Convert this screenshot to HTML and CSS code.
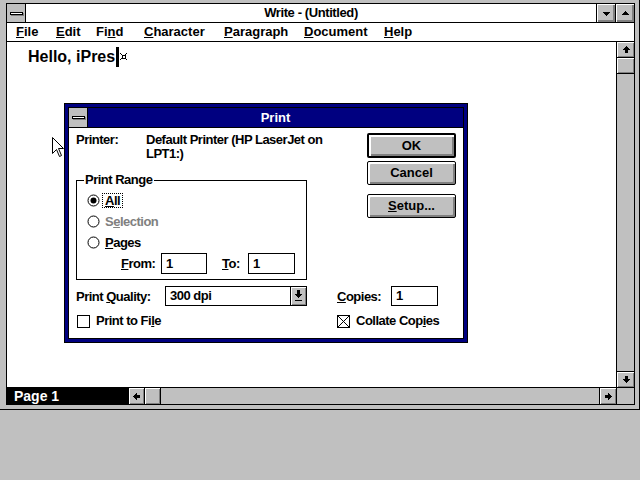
FILE: index.html
```html
<!DOCTYPE html>
<html>
<head>
<meta charset="utf-8">
<title>Write - (Untitled)</title>
<link rel="stylesheet" href="styles.css">
</head>
<body>
<div class="desktop">
  <div class="window">
    <div class="frame">
      <div class="titlebar">
        <div class="sysbox"><span class="sysdash"></span></div>
        <div class="title">Write - (Untitled)</div>
        <div class="tbtn"><svg width="17" height="18" viewBox="0 0 17 18" shape-rendering="crispEdges"><path d="M5 8h7v1h-1v1h-1v1h-1v1h-1v-1h-1v-1h-1v-1h-1z"/></svg></div>
        <div class="tbtn"><svg width="17" height="18" viewBox="0 0 17 18" shape-rendering="crispEdges"><path d="M5 11h7v-1h-1v-1h-1v-1h-1v-1h-1v1h-1v1h-1v1h-1z"/></svg></div>
      </div>
      <div class="menubar">
        <span><u>F</u>ile</span>
        <span><u>E</u>dit</span>
        <span>Fi<u>n</u>d</span>
        <span><u>C</u>haracter</span>
        <span><u>P</u>aragraph</span>
        <span><u>D</u>ocument</span>
        <span><u>H</u>elp</span>
      </div>
      <div class="client">
        <div class="doc"><span class="doctext">Hello, iPres</span><span class="caret"></span><svg class="endmark" width="7" height="7" viewBox="0 0 7 7" shape-rendering="crispEdges"><path d="M2 2h3v3h-3z" fill="none" stroke="#000"/><path d="M0 0h1v1h-1zM6 0h1v1h-1zM0 6h1v1h-1zM6 6h1v1h-1zM1 1h1v1h-1zM5 1h1v1h-1zM1 5h1v1h-1zM5 5h1v1h-1z"/></svg></div>
        <div class="vscroll">
          <div class="sbtn sbtn-top"><svg width="16" height="15" viewBox="0 0 15 15" shape-rendering="crispEdges"><path d="M7 4h1v1h1v1h1v1h1v1h-2v3h-3v-3h-2v-1h1v-1h1v-1h1z"/></svg></div>
          <div class="sbtn sbtn-top thumb"></div>
          <div class="track"></div>
          <div class="sbtn sbtn-bottom"><svg width="16" height="15" viewBox="0 0 15 15" shape-rendering="crispEdges"><path transform="rotate(180 7.5 7.5)" d="M7 4h1v1h1v1h1v1h1v1h-2v3h-3v-3h-2v-1h1v-1h1v-1h1z"/></svg></div>
        </div>
        <div class="hrow">
          <div class="pagebox">Page 1</div>
          <div class="hbtn hbtn-left"><svg width="15" height="16" viewBox="0 0 15 15" shape-rendering="crispEdges"><path transform="rotate(-90 7.5 7.5)" d="M7 4h1v1h1v1h1v1h1v1h-2v3h-3v-3h-2v-1h1v-1h1v-1h1z"/></svg></div>
          <div class="hbtn hbtn-left"></div>
          <div class="track"></div>
          <div class="hbtn hbtn-right"><svg width="15" height="16" viewBox="0 0 15 15" shape-rendering="crispEdges"><path transform="rotate(90 7.5 7.5)" d="M7 4h1v1h1v1h1v1h1v1h-2v3h-3v-3h-2v-1h1v-1h1v-1h1z"/></svg></div>
        </div>
        <div class="corner"></div>
      </div>
    </div>
  </div>

  <div class="dialog">
    <div class="dinner">
      <div class="dtitle">
        <div class="sysbox"><span class="sysdash"></span></div>
        <div class="dtitle-text">Print</div>
      </div>
      <div class="dbody">
        <div class="dtop">
          <div class="dleft">
            <div class="printer-row">
              <div class="printer-label">Printer:</div>
              <div class="printer-value">Default Printer (HP LaserJet on<br>LPT1:)</div>
            </div>
            <fieldset class="range">
              <legend>Print Range</legend>
              <div class="radio-row">
                <svg class="radio" width="13" height="13" viewBox="0 0 13 13"><circle cx="6.5" cy="6.5" r="5.5" fill="#fff" stroke="#000"/><circle cx="6.5" cy="6.5" r="3"/></svg>
                <span class="rlabel focus"><u>A</u>ll</span>
              </div>
              <div class="radio-row disabled">
                <svg class="radio" width="13" height="13" viewBox="0 0 13 13"><circle cx="6.5" cy="6.5" r="5.5" fill="#fff" stroke="#000"/></svg>
                <span class="rlabel">S<u>e</u>lection</span>
              </div>
              <div class="radio-row">
                <svg class="radio" width="13" height="13" viewBox="0 0 13 13"><circle cx="6.5" cy="6.5" r="5.5" fill="#fff" stroke="#000"/></svg>
                <span class="rlabel"><u>P</u>ages</span>
              </div>
              <div class="from-row">
                <span class="from-label"><u>F</u>rom:</span>
                <span class="field from-field">1</span>
                <span class="to-label"><u>T</u>o:</span>
                <span class="field to-field">1</span>
              </div>
            </fieldset>
          </div>
          <div class="dright">
            <div class="btn btn-default">OK</div>
            <div class="btn btn-cancel">Cancel</div>
            <div class="btn btn-setup"><u>S</u>etup...</div>
          </div>
        </div>
        <div class="dbottom">
          <div class="qlabel">Print <u>Q</u>uality:</div>
          <div class="combo">
            <span class="combo-text">300 dpi</span>
            <span class="combo-btn"><svg width="15" height="18" viewBox="0 0 15 18" shape-rendering="crispEdges"><path d="M6 3h3v4h2v1h-1v1h-1v1h-1v1h-1v-1h-1v-1h-1v-1h-1v-1h2z"/><path d="M4 13h7v1h-7z"/></svg></span>
          </div>
          <div class="gapcol"></div>
          <div class="clabel"><u>C</u>opies:</div>
          <div class="field copies-field">1</div>
          <div class="check ptf">
            <svg width="13" height="13" viewBox="0 0 13 13" shape-rendering="crispEdges"><rect x="0.5" y="0.5" width="12" height="12" fill="#fff" stroke="#000"/></svg>
            <span>Print to Fi<u>l</u>e</span>
          </div>
          <div class="check collate">
            <svg width="13" height="13" viewBox="0 0 13 13"><rect x="0.5" y="0.5" width="12" height="12" fill="#fff" stroke="#000" shape-rendering="crispEdges"/><path d="M1 1L12 12M12 1L1 12" stroke="#000" stroke-width="1"/></svg>
            <span>Collate Cop<u>i</u>es</span>
          </div>
        </div>
      </div>
    </div>
  </div>

  <svg class="pointer" width="13" height="21" viewBox="0 0 13 21"><path d="M0.5 0.5L0.5 16.5L4.5 12.5L7.5 19.5L9.5 18.5L6.5 11.5L11.5 11.5Z" fill="#fff" stroke="#000" stroke-linejoin="miter"/></svg>
</div>
</body>
</html>
```

FILE: styles.css
```css
html, body {
  margin: 0;
  padding: 0;
}

body {
  font-family: "Liberation Sans", Arial, sans-serif;
  font-weight: bold;
  font-size: 13px;
  color: #000;
  background: #c0c0c0;
}

u {
  text-decoration: underline;
  text-underline-offset: 1px;
}

.desktop {
  position: relative;
  width: 640px;
  height: 480px;
  background: #c0c0c0;
  overflow: hidden;
}

/* ---------- main window ---------- */
.window {
  width: 640px;
  height: 410px;
  box-sizing: border-box;
  background: #c0c0c0;
  border-right: 1px solid #000;
  border-bottom: 1px solid #000;
  padding: 3px 4px 4px 6px;
}

.frame {
  height: 100%;
  box-sizing: border-box;
  border: 1px solid #000;
  display: flex;
  flex-direction: column;
}

.titlebar {
  height: 18px;
  flex: none;
  display: flex;
  background: #fff;
  border-bottom: 1px solid #000;
}

.sysbox {
  width: 18px;
  flex: none;
  background: #c0c0c0;
  border-right: 1px solid #000;
  display: flex;
  align-items: center;
  justify-content: center;
}

.sysdash {
  display: block;
  width: 11px;
  height: 1px;
  background: #fff;
  border: 1px solid #000;
  box-shadow: 1px 1px 0 #808080;
}

.title {
  flex: 1;
  text-align: center;
  line-height: 18px;
  letter-spacing: -0.4px;
}

.tbtn {
  width: 18px;
  flex: none;
  border-left: 1px solid #000;
  background: #c0c0c0;
  box-shadow: inset 1px 1px 0 #fff, inset -1px -1px 0 #808080, inset -2px -2px 0 #808080;
  display: flex;
  align-items: center;
  justify-content: center;
}

.menubar {
  height: 18px;
  flex: none;
  background: #fff;
  border-bottom: 1px solid #000;
  display: grid;
  grid-template-columns: 40px 40px 48px 80px 80px 80px auto;
  padding-left: 9px;
  line-height: 18px;
}

.client {
  flex: 1;
  display: grid;
  grid-template-columns: 1fr 17px;
  grid-template-rows: 1fr 16px;
  gap: 1px;
  background: #000;
}

.doc {
  background: #fff;
  padding: 5px 0 0 21px;
  font-size: 16px;
  line-height: 20px;
  display: flex;
  align-items: flex-start;
}

.caret {
  display: block;
  width: 3px;
  height: 20px;
  background: #000;
  margin-left: 1px;
}

.endmark {
  margin-top: 6px;
  margin-left: 1px;
}

.vscroll {
  background: #c0c0c0;
  display: flex;
  flex-direction: column;
}

.sbtn {
  height: 15px;
  flex: none;
  background: #c0c0c0;
  box-shadow: inset 1px 1px 0 #fff, inset -1px -1px 0 #808080;
  display: flex;
  align-items: center;
  justify-content: center;
}

.sbtn-top {
  border-bottom: 1px solid #000;
}

.sbtn-bottom {
  border-top: 1px solid #000;
}

.track {
  flex: 1;
  background: #c0c0c0;
}

.hrow {
  display: flex;
  background: #c0c0c0;
}

.pagebox {
  flex: none;
  background: #000;
  color: #fff;
  font-size: 14px;
  line-height: 16px;
  padding-left: 7px;
  box-sizing: border-box;
  width: 122px;
}

.hbtn {
  width: 15px;
  flex: none;
  background: #c0c0c0;
  box-shadow: inset 1px 1px 0 #fff, inset -1px -1px 0 #808080;
  display: flex;
  align-items: center;
  justify-content: center;
}

.hbtn-left {
  border-right: 1px solid #000;
}

.hbtn-right {
  border-left: 1px solid #000;
  width: 16px;
}

.corner {
  background: #c0c0c0;
}

/* ---------- dialog ---------- */
.dialog {
  position: absolute;
  left: 64px;
  top: 103px;
  width: 404px;
  height: 240px;
  box-sizing: border-box;
  border: 1px solid #000;
  padding: 3px;
  background: #000080;
  letter-spacing: -0.5px;
}

.dinner {
  height: 100%;
  box-sizing: border-box;
  border: 1px solid #000;
  display: flex;
  flex-direction: column;
}

.dtitle {
  height: 19px;
  flex: none;
  display: flex;
  border-bottom: 1px solid #000;
}

.dtitle-text {
  flex: 1;
  background: #000080;
  color: #fff;
  text-align: center;
  line-height: 19px;
  letter-spacing: 0;
}

.dbody {
  flex: 1;
  background: #fff;
  padding: 5px 7px 0 7px;
}

.dtop {
  display: flex;
  align-items: flex-start;
}

.dleft {
  width: 231px;
  flex: none;
}

.printer-row {
  display: flex;
  line-height: 14px;
  white-space: nowrap;
}

.printer-label {
  width: 70px;
  flex: none;
}

.printer-value {
  flex: none;
}

.range {
  margin: 13px 0 0 0;
  padding: 4px 0 5px 7px;
  border: 1px solid #000;
  min-inline-size: 0;
  box-sizing: border-box;
  width: 231px;
}

.range legend {
  padding: 0 2px 0 1px;
  line-height: 12px;
}

.radio-row {
  height: 21px;
  display: flex;
  align-items: center;
  padding-left: 3px;
}

.radio {
  flex: none;
  display: block;
}

.rlabel {
  margin-left: 2px;
  padding: 0 2px;
  border: 1px solid transparent;
  line-height: 13px;
}

.rlabel.focus {
  border: 1px dotted #000;
}

.disabled .rlabel {
  color: #808080;
}

.from-row {
  height: 21px;
  display: flex;
  align-items: center;
  padding-left: 37px;
}

.from-label {
  width: 40px;
}

.to-label {
  width: 26px;
  margin-left: 15px;
}

.field {
  display: block;
  box-sizing: border-box;
  height: 21px;
  border: 1px solid #000;
  background: #fff;
  padding-left: 4px;
  line-height: 19px;
}

.from-field {
  width: 46px;
}

.to-field {
  width: 47px;
}

.dright {
  margin-left: 60px;
  width: 89px;
  display: flex;
  flex-direction: column;
}

.btn {
  box-sizing: border-box;
  height: 24px;
  border: 1px solid #000;
  border-radius: 2px;
  background: #c0c0c0;
  box-shadow: inset 1px 1px 0 #fff, inset 2px 2px 0 #fff, inset -1px -1px 0 #808080, inset -2px -2px 0 #808080;
  text-align: center;
  line-height: 22px;
  letter-spacing: 0;
}

.btn-default {
  height: 25px;
  border-width: 2px;
  line-height: 21px;
}

.btn-cancel {
  margin-top: 3px;
}

.btn-setup {
  margin-top: 9px;
}

.dbottom {
  margin-top: 6px;
  display: grid;
  grid-template-columns: 89px 142px 30px 54px 47px;
  grid-template-rows: 20px 14px;
  row-gap: 8px;
  align-items: center;
  white-space: nowrap;
}

.combo {
  height: 20px;
  box-sizing: border-box;
  border: 1px solid #000;
  display: flex;
}

.combo-text {
  flex: 1;
  padding-left: 4px;
  line-height: 18px;
}

.combo-btn {
  width: 15px;
  border-left: 1px solid #000;
  background: #c0c0c0;
  box-shadow: inset 1px 1px 0 #fff, inset -1px -1px 0 #808080;
  display: flex;
  align-items: center;
  justify-content: center;
}

.copies-field {
  height: 20px;
  line-height: 18px;
}

.check {
  display: flex;
  align-items: center;
  gap: 6px;
  line-height: 14px;
}

.check svg {
  flex: none;
  display: block;
}

.ptf {
  grid-column: 1 / 3;
  padding-left: 1px;
}

.collate {
  grid-column: 4 / 6;
}

.pointer {
  position: absolute;
  left: 52px;
  top: 137px;
}
```
